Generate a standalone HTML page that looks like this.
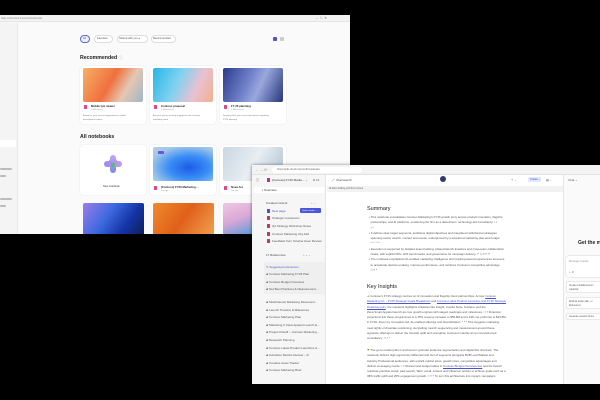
<!DOCTYPE html>
<html><head><meta charset="utf-8"><style>
*{margin:0;padding:0;box-sizing:border-box}
body{width:600px;height:400px;background:#000;position:relative;overflow:hidden;font-family:"Liberation Sans",sans-serif;color:#333}
.a{position:absolute}
.t{position:absolute;white-space:nowrap;font-size:3.6px;color:#555;line-height:4px}
.card{position:absolute;background:#fff;border-radius:3px;box-shadow:0 0 1px rgba(0,0,0,.15)}
.img{position:absolute;left:3px;right:3px;top:2px;height:34px;border-radius:2px}
.ln{position:absolute;height:1.6px;background:#9a9a9a;border-radius:1px}
.ic{position:absolute;width:3px;height:3.5px;border-radius:.5px}
</style></head><body>
<!-- back window -->
<div class="a" style="left:0;top:15px;width:350px;height:219px;background:#fafafa"></div>
<div class="a" style="left:0;top:15px;width:350px;height:7px;background:#f3f3f3;border-bottom:1px solid #e5e5e5"></div>
<div class="t" style="left:1px;top:17px;font-size:2.5px;color:#888">https://edit.cloud.microsoft/notebooks</div>
<div class="t" style="left:316px;top:16px;color:#777">–&nbsp;&nbsp;□&nbsp;&nbsp;✕</div>
<div class="a" style="left:0;top:23px;width:18px;height:211px;background:#f4f4f4;border-right:1px solid #e8e8e8"></div>
<div class="a" style="left:0;top:140px;width:16px;height:7px;background:#fff"></div>
<div class="ln" style="left:0;top:168px;width:12px;background:#bbb"></div>
<div class="ln" style="left:0;top:175px;width:6px;background:#bbb"></div>
<div class="ln" style="left:0;top:198px;width:12px;background:#bbb"></div>
<div class="ln" style="left:0;top:205px;width:6px;background:#bbb"></div>
<!-- filters -->
<div class="a" style="left:80px;top:35px;width:10px;height:8px;border:1px solid #5b6ad8;border-radius:5px;background:#eef0ff"></div>
<div class="t" style="left:83px;top:37px;font-size:2.6px;color:#444">All</div>
<div class="a" style="left:94px;top:35px;width:19px;height:8px;border:1px solid #ddd;border-radius:5px;background:#fff"></div>
<div class="t" style="left:97px;top:37px;font-size:2.6px">Favorites</div>
<div class="a" style="left:117px;top:35px;width:31px;height:8px;border:1px solid #ddd;border-radius:5px;background:#fff"></div>
<div class="t" style="left:119px;top:37px;font-size:2.6px">Shared with you <span style="color:#3b48c8">●</span></div>
<div class="a" style="left:151px;top:35px;width:25px;height:8px;border:1px solid #ddd;border-radius:5px;background:#fff"></div>
<div class="t" style="left:153px;top:37px;font-size:2.6px">Recommended</div>
<div class="a" style="left:273px;top:37px;width:4px;height:4px;background:#4b57c8;border-radius:1px"></div>
<div class="a" style="left:280px;top:37px;width:4px;height:4px;background:#ccc;border-radius:1px"></div>
<div class="t" style="left:80px;top:55px;font-size:5.2px;line-height:6px;font-weight:bold;color:#222">Recommended <span style="font-weight:normal;color:#aaa;font-size:4px">ⓘ</span></div>
<!-- rec cards -->
<div class="card" style="left:80px;top:66px;width:66px;height:58px"><div class="img" style="background:linear-gradient(120deg,#f5b066,#f0703e 45%,#e5c7b3 70%,#9fb7c5)"></div></div>
<div class="card" style="left:150px;top:66px;width:66px;height:58px"><div class="img" style="background:linear-gradient(115deg,#27b6e8,#7fd2ef 40%,#e9c1d2 70%,#f1b08d)"></div></div>
<div class="card" style="left:220px;top:66px;width:66px;height:58px"><div class="img" style="background:linear-gradient(115deg,#2b3c8c,#6f7fc8 40%,#9aa8de 60%,#27357a)"></div></div>
<div class="ic" style="left:84px;top:105px;background:#e0468b"></div><div class="t" style="left:91px;top:104px;font-size:2.8px;color:#222;font-weight:bold">Mobile lyic viewer</div><div class="t" style="left:91px;top:108px;font-size:2.2px;color:#999">1 Reference</div><div class="t" style="left:83px;top:114px;font-size:2.2px;color:#777">Based on your recent engagement in mobile<br>development videos</div>
<div class="ic" style="left:154px;top:105px;background:#e0468b"></div><div class="t" style="left:161px;top:104px;font-size:2.8px;color:#222;font-weight:bold">Contoso proposal</div><div class="t" style="left:161px;top:108px;font-size:2.2px;color:#999">4 References</div><div class="t" style="left:153px;top:114px;font-size:2.2px;color:#777">Because you've actively engaged in the Contoso<br>marketing team</div>
<div class="ic" style="left:224px;top:105px;background:#e0468b"></div><div class="t" style="left:231px;top:104px;font-size:2.8px;color:#222;font-weight:bold">FY 26 planning</div><div class="t" style="left:231px;top:108px;font-size:2.2px;color:#999">3 References</div><div class="t" style="left:223px;top:114px;font-size:2.2px;color:#777">Drawing from your recent documents regarding<br>FY26 planning</div>
<div class="t" style="left:80px;top:134px;font-size:5.2px;line-height:6px;font-weight:bold;color:#222">All notebooks</div>
<div class="card" style="left:80px;top:145px;width:66px;height:50px"></div>
<div class="a" style="left:105px;top:155px;width:16px;height:16px;background:radial-gradient(circle,#6bd08a 0 15%,#b48ee8 16% 40%,transparent 42%)"></div>
<div class="a" style="left:110px;top:155px;width:6px;height:18px;background:linear-gradient(#c8a4f0,#7b8ae8);border-radius:3px"></div>
<div class="a" style="left:104px;top:161px;width:18px;height:6px;background:linear-gradient(90deg,#9a8cf0,#c79ae8);border-radius:3px"></div>
<div class="a" style="left:111px;top:163px;width:4px;height:4px;background:#4fc07a;border-radius:1px"></div>
<div class="t" style="left:103px;top:185px;font-size:2.6px;color:#333">New notebook</div>
<div class="card" style="left:150px;top:145px;width:66px;height:50px"><div class="img" style="background:radial-gradient(ellipse at 60% 60%,#1d5be8,#3a8ef5 40%,#9fc6e8 75%,#b8cfe0)"></div></div>
<div class="a" style="left:158px;top:151px;width:6px;height:3px;background:#6a55d8;border-radius:1px"></div>
<div class="ic" style="left:154px;top:186px;background:#e0468b"></div><div class="t" style="left:161px;top:185px;font-size:2.8px;color:#222;font-weight:bold">[Contoso] FY26 Marketing ...</div><div class="t" style="left:161px;top:189px;font-size:2.2px;color:#999">1m ago</div>
<div class="card" style="left:220px;top:145px;width:66px;height:50px"><div class="img" style="background:linear-gradient(120deg,#c9d6e2,#e8eef3 50%,#aebfcd)"></div></div>
<div class="ic" style="left:224px;top:186px;background:#e0468b"></div><div class="t" style="left:231px;top:185px;font-size:2.8px;color:#222;font-weight:bold">Nova Arc</div><div class="t" style="left:231px;top:189px;font-size:2.2px;color:#999">1m ago</div>
<div class="a" style="left:83px;top:203px;width:61px;height:31px;background:linear-gradient(125deg,#9c7ee8,#3d6ae0 40%,#1535a8 70%,#0c1f5a);border-radius:2px 2px 0 0"></div>
<div class="a" style="left:153px;top:203px;width:61px;height:31px;background:linear-gradient(125deg,#f08a2c,#e0601a 50%,#f0a050);border-radius:2px 2px 0 0"></div>
<div class="a" style="left:223px;top:203px;width:61px;height:31px;background:linear-gradient(160deg,#f0c8e0,#d9a8d8 40%,#5a9ad8 80%);border-radius:2px 2px 0 0"></div>
<!-- front window -->
<div class="a" style="left:252px;top:165px;width:348px;height:219px;background:#fff;box-shadow:0 0 3px rgba(0,0,0,.5)"></div>
<div class="a" style="left:252px;top:165px;width:348px;height:10px;background:#f3f3f3;border-bottom:1px solid #e2e2e2"></div>
<div class="t" style="left:255px;top:168px;color:#888">←&nbsp;→&nbsp;⟳</div>
<div class="a" style="left:272px;top:167px;width:90px;height:6px;background:#fff;border-radius:3px"></div>
<div class="t" style="left:277px;top:168px;font-size:2.6px;color:#666">https://edit.cloud.microsoft/notebooks</div>
<!-- sidebar -->
<div class="a" style="left:252px;top:175px;width:74px;height:209px;background:#f6f6f6;border-right:1px solid #e6e6e6"></div>
<div class="t" style="left:256px;top:178px;color:#888">◫</div>
<div class="ic" style="left:267px;top:178px;background:#c0306b"></div>
<div class="t" style="left:272px;top:178px;font-size:3px;color:#333">[Contoso] FY26 Marke... ⌄</div>
<div class="t" style="left:313px;top:178px;font-size:3px;color:#555">⧉ 12</div>
<div class="a" style="left:254px;top:187px;width:70px;height:6px;background:#fff;border-radius:1px"></div>
<div class="t" style="left:262px;top:188px;font-size:3px;color:#333">▪ Overview</div>
<div class="t" style="left:266px;top:201px;font-size:3px;color:#444">Created content</div>
<div class="t" style="left:311px;top:201px;font-size:3px;color:#999">+ ⌄</div>
<div class="ic" style="left:267px;top:209px;background:#4b4fc8"></div><div class="t" style="left:272px;top:209px;font-size:3px;color:#4b4fc8">New page</div>
<div class="a" style="left:300px;top:208px;width:21px;height:5px;background:#4b57d8;border-radius:1px"></div><div class="t" style="left:302px;top:209px;font-size:2.2px;color:#fff">Quick create ⌄</div>
<div class="ic" style="left:267px;top:216px;background:#b0405a"></div><div class="t" style="left:272px;top:216px;font-size:3px">Strategic Livestream</div>
<div class="ic" style="left:267px;top:224px;background:#b0405a"></div><div class="t" style="left:272px;top:224px;font-size:3px">Q2 Strategy Workshop Notes</div>
<div class="ic" style="left:267px;top:232px;background:#b0405a"></div><div class="t" style="left:272px;top:232px;font-size:3px">Contoso Marketing Org Add</div>
<div class="ic" style="left:267px;top:239px;background:#b0405a"></div><div class="t" style="left:272px;top:239px;font-size:3px">Feedback from October Exec Review</div>
<div class="t" style="left:266px;top:253px;font-size:3px;color:#444">17 References</div>
<div class="t" style="left:303px;top:253px;font-size:3px;color:#999">+ + ⌄</div>
<div class="a" style="left:264px;top:262px;width:61px;height:32px;background:#efefef"></div>
<div class="t" style="left:266px;top:265px;font-size:3px;color:#5b5bc8">✎ Suggested references</div>
<div class="t" style="left:266px;top:272px;font-size:3px">▰ Contoso Marketing FY26 Plan</div>
<div class="t" style="left:266px;top:280px;font-size:3px">▰ Contoso Budget Overview</div>
<div class="t" style="left:266px;top:287px;font-size:3px">▰ Net Best Practices &amp; Measurement...</div>
<div class="t" style="left:266px;top:300px;font-size:3px">▰ Multichannel Marketing Movement...</div>
<div class="t" style="left:266px;top:308px;font-size:3px">▰ Launch Timeline &amp; Milestones</div>
<div class="t" style="left:266px;top:315px;font-size:3px">▰ Contoso Marketing Plan</div>
<div class="t" style="left:266px;top:323px;font-size:3px">▰ Marketing X Zava Apparel Launch E...</div>
<div class="t" style="left:266px;top:330px;font-size:3px">▰ Project Kickoff – Contoso Marketing...</div>
<div class="t" style="left:266px;top:338px;font-size:3px">▰ Research Planning</div>
<div class="t" style="left:266px;top:346px;font-size:3px">▰ Contoso Latest Product Launches &amp;...</div>
<div class="t" style="left:266px;top:353px;font-size:3px">▰ Activation Metrics Review – 2/</div>
<div class="t" style="left:266px;top:361px;font-size:3px">▰ Creative Asset Tracker</div>
<div class="t" style="left:266px;top:368px;font-size:3px">▰ Contoso Marketing Brief</div>
<!-- main -->
<div class="t" style="left:332px;top:178px;font-size:3px;color:#444">⤢&nbsp;&nbsp;Overview ⧉</div>
<div class="a" style="left:440px;top:176px;width:6px;height:6px;border-radius:3px;background:#2f3a66"></div>
<div class="t" style="left:511px;top:178px;font-size:3px;color:#777">↰ ⌄</div>
<div class="a" style="left:528px;top:177px;width:13px;height:5px;background:#e4e8ff;border-radius:1px"></div>
<div class="t" style="left:530px;top:178px;font-size:2.6px;color:#3b48c8">Create ⌄</div>
<div class="t" style="left:546px;top:178px;font-size:3px;color:#777">▦ ⌄</div>
<div class="a" style="left:327px;top:186px;width:236px;height:6px;background:#f2f2f2"></div>
<div class="t" style="left:329px;top:187px;font-size:2.4px;color:#666">⊞ Start drafting with this content</div>
<div class="t" style="left:367px;top:206px;font-size:5.5px;line-height:6px;color:#222">Summary</div>
<div class="t" style="left:369px;top:215px;font-size:2.9px;line-height:5.3px;color:#555">• This notebook consolidates Contoso Marketing's FY26 growth story across product innovation, flagship<br>&nbsp;&nbsp;partnerships, and AI platforms, positioning the firm as a data-driven, technology-led consultancy. ¹ ²<br>&nbsp;&nbsp;³ ⁴<br>• It defines clear target segments, ambitious digital objectives and integrated multichannel strategies<br>&nbsp;&nbsp;spanning social, search, content and events, underpinned by a structured marketing plan and budget.<br>&nbsp;&nbsp;⁵ ⁶ ⁷ ⁸ ⁹<br>• Execution is supported by detailed asset tracking, phased launch timelines and cross-team collaboration<br>&nbsp;&nbsp;rituals, with explicit KPIs, ROI benchmarks, and governance for campaign delivery. ¹⁰ ¹¹ ¹² ¹³ ¹⁴<br>• The notebook emphasizes AI-enabled marketing intelligence and Copilot-powered experiences as levers<br>&nbsp;&nbsp;to accelerate decision-making, improve performance, and reinforce Contoso's competitive advantage.<br>&nbsp;&nbsp;¹ ² ³ ⁴</div>
<div class="t" style="left:367px;top:284px;font-size:5.5px;line-height:6px;color:#222">Key Insights</div>
<div class="t" style="left:367px;top:294px;font-size:2.9px;line-height:5.3px;color:#555">⊿ Contoso's FY26 strategy centres on AI innovation and flagship client partnerships. Across <u style="color:#4b57c8">Contoso</u><br><u style="color:#4b57c8">Marketing Inc. - FY26 Strategic Goals Breakdown</u> and <u style="color:#4b57c8">Contoso Latest Product Launches and FY26 Strategic</u><br><u style="color:#4b57c8">Roadmap.pptx</u>, the notebook highlights initiatives like Insight, Copilot Suite, Sustain+ and the<br>Zava Smart Apparel launch as core growth engines with staged roadmaps and milestones. ¹ ² ³ Financial<br>projections link these programmes to a 15% revenue increase to $56.8M and a 24% net profit rise to $23.8M<br>in FY26, driven by innovation-led, AI-enabled offerings and diversification. ⁴ ⁵ ⁶ This suggests marketing<br>must tightly orchestrate positioning, storytelling, launch sequencing and measurement around these<br>signature offerings to deliver the forecast uplift and strengthen Contoso's identity as an innovation-led<br>consultancy. ¹ ² ³ ⁴</div>
<div class="t" style="left:367px;top:348px;font-size:2.9px;line-height:5.3px;color:#555"><span style="color:#5a8a2a">⚑</span> The go-to-market plan is anchored in granular audience segmentation and digital-first channels. The<br>notebook defines high-opportunity Millennial and Gen Z segments alongside B2B Local Market and<br>Industry Professional audiences, with explicit market sizes, growth rates, competitive advantages and<br>distinct messaging needs. ¹ ² Channel and budget tables in <u style="color:#4b57c8">Contoso Budget Overview.xlsx</u> and the launch<br>roadmap prioritise social, paid search, SEO, email, content and influencer activity to achieve goals such as a<br>38% traffic uplift and 25% engagement growth. ¹ ² ³ ⁴ To turn this architecture into impact, campaigns</div>
<!-- copilot -->
<div class="a" style="left:563px;top:175px;width:37px;height:209px;background:#fafafa;border-left:1px solid #e6e6e6"></div>
<div class="t" style="left:568px;top:178px;font-size:3px;color:#555">Chat ⌄</div>
<div class="t" style="left:578px;top:240px;font-size:5px;line-height:6px;font-weight:bold;color:#222">Get the m</div>
<div class="a" style="left:566px;top:256px;width:36px;height:21px;background:#fff;border-radius:3px;box-shadow:0 0 1.5px rgba(0,0,0,.25)"></div>
<div class="t" style="left:569px;top:260px;font-size:2.6px;color:#999">Message Copilot</div>
<div class="t" style="left:569px;top:270px;font-size:3px;color:#888">+ ⊘</div>
<div class="a" style="left:566px;top:281px;width:36px;height:12px;background:#fff;border:1px solid #e8e8e8;border-radius:2px"></div>
<div class="t" style="left:569px;top:284px;font-size:2.3px;color:#555">Create a detailed summ<br>notebook</div>
<div class="a" style="left:566px;top:297px;width:36px;height:12px;background:#fff;border:1px solid #e8e8e8;border-radius:2px"></div>
<div class="t" style="left:569px;top:300px;font-size:2.3px;color:#555">Draft an action plan + c<br>References</div>
<div class="a" style="left:566px;top:313px;width:36px;height:7px;background:#fff;border:1px solid #e8e8e8;border-radius:2px"></div>
<div class="t" style="left:569px;top:315px;font-size:2.3px;color:#555">Generate session theme</div>
</body></html>
